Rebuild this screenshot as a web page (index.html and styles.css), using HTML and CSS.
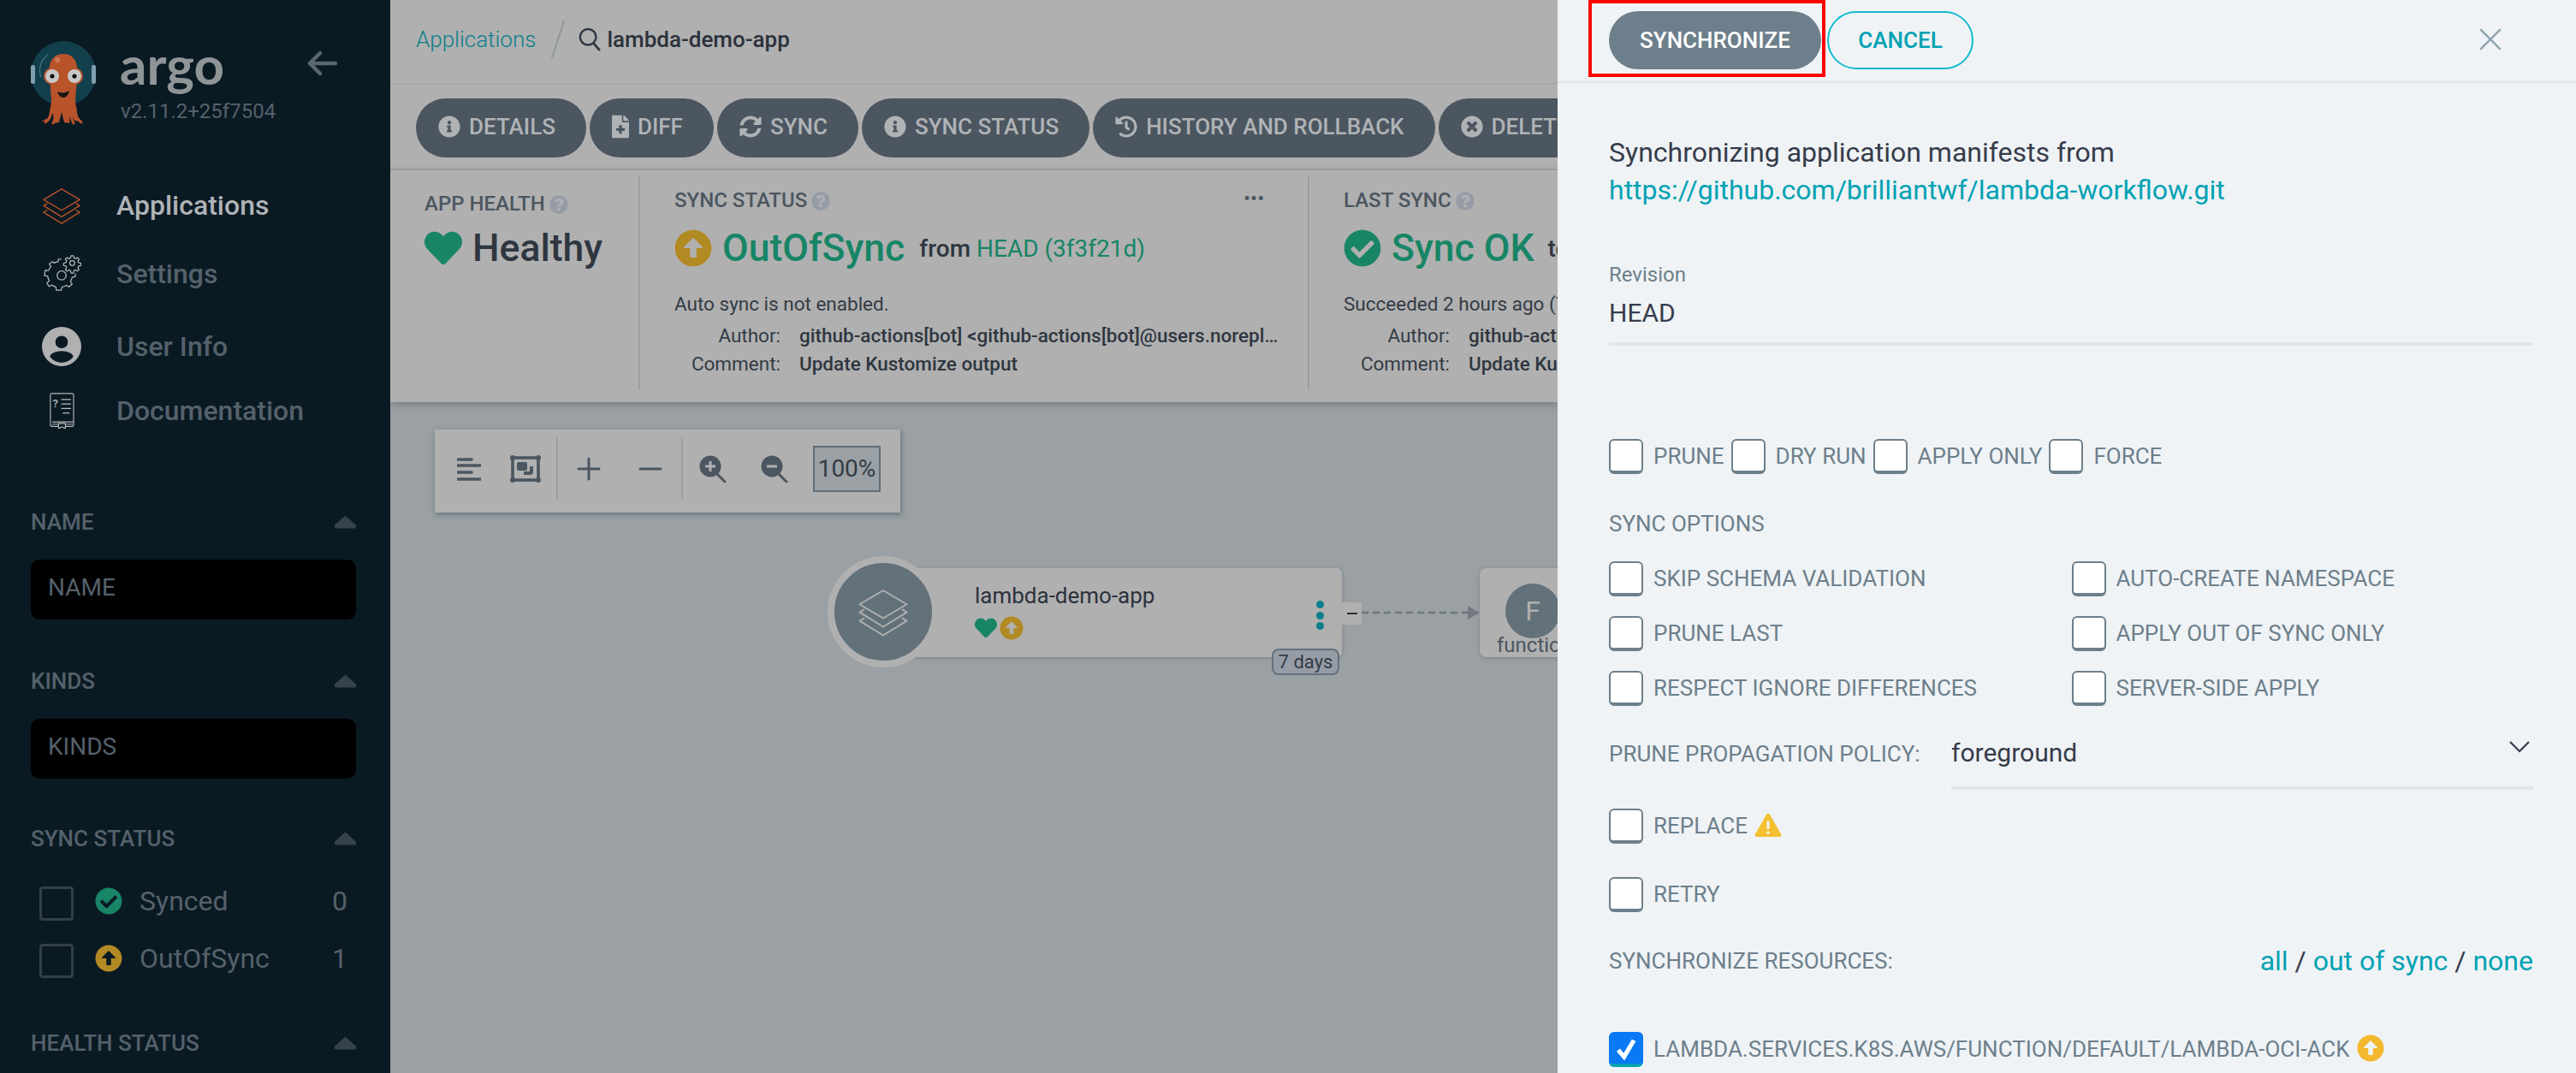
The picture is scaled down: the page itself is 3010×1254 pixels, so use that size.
FILE: index.html
```html
<!DOCTYPE html>
<html lang="en">
<head>
<meta charset="utf-8">
<title>lambda-demo-app - Argo CD</title>
<link rel="stylesheet" href="styles.css">
</head>
<body>
<svg class="sprite" aria-hidden="true">
  <symbol id="i-heart" viewBox="0 0 512 512"><path d="M462.3 62.6C407.5 15.9 326 24.3 275.7 76.2L256 96.5l-19.7-20.3C186.1 24.3 104.5 15.9 49.7 62.6c-62.8 53.6-66.1 149.8-9.9 207.9l193.5 199.8c12.5 12.9 32.8 12.9 45.3 0l193.5-199.8c56.3-58.1 53-154.3-9.8-207.9z"/></symbol>
  <symbol id="i-up" viewBox="0 0 512 512"><path d="M8 256C8 119 119 8 256 8s248 111 248 248-111 248-248 248S8 393 8 256zm292 116V256h70.9c10.7 0 16.1-13 8.5-20.5L264.5 121.2c-4.7-4.7-12.2-4.7-16.9 0l-115 114.3c-7.6 7.6-2.2 20.5 8.5 20.5H212v116c0 6.6 5.4 12 12 12h64c6.6 0 12-5.4 12-12z"/></symbol>
  <symbol id="i-check" viewBox="0 0 512 512"><path d="M504 256c0 136.967-111.033 248-248 248S8 392.967 8 256 119.033 8 256 8s248 111.033 248 248zM227.314 387.314l184-184c6.248-6.248 6.248-16.379 0-22.627l-22.627-22.627c-6.248-6.249-16.379-6.249-22.628 0L216 308.118l-70.059-70.059c-6.248-6.248-16.379-6.248-22.628 0l-22.627 22.627c-6.248 6.248-6.248 16.379 0 22.627l104 104c6.249 6.249 16.379 6.249 22.628.001z"/></symbol>
  <symbol id="i-info" viewBox="0 0 512 512"><path d="M256 8C119.043 8 8 119.083 8 256c0 136.997 111.043 248 248 248s248-111.003 248-248C504 119.083 392.957 8 256 8zm0 110c23.196 0 42 18.804 42 42s-18.804 42-42 42-42-18.804-42-42 18.804-42 42-42zm56 254c0 6.627-5.373 12-12 12h-88c-6.627 0-12-5.373-12-12v-24c0-6.627 5.373-12 12-12h12v-64h-12c-6.627 0-12-5.373-12-12v-24c0-6.627 5.373-12 12-12h64c6.627 0 12 5.373 12 12v100h12c6.627 0 12 5.373 12 12v24z"/></symbol>
  <symbol id="i-q" viewBox="0 0 512 512"><path d="M504 256c0 136.997-111.043 248-248 248S8 392.997 8 256C8 119.083 119.043 8 256 8s248 111.083 248 248zM262.655 90c-54.497 0-89.255 22.957-116.549 63.758-3.536 5.286-2.353 12.415 2.715 16.258l34.699 26.31c5.205 3.947 12.621 3.008 16.665-2.122 17.864-22.658 30.113-35.797 57.303-35.797 20.429 0 45.698 13.148 45.698 32.958 0 14.976-12.363 22.667-32.534 33.976C247.128 238.528 216 254.941 216 296v4c0 6.627 5.373 12 12 12h56c6.627 0 12-5.373 12-12v-1.333c0-28.462 83.186-29.647 83.186-106.667 0-58.002-60.165-102-116.531-102zM256 338c-25.365 0-46 20.635-46 46 0 25.364 20.635 46 46 46s46-20.636 46-46c0-25.365-20.635-46-46-46z"/></symbol>
  <symbol id="i-times" viewBox="0 0 512 512"><path d="M256 8C119 8 8 119 8 256s111 248 248 248 248-111 248-248S393 8 256 8zm121.6 313.1c4.7 4.7 4.7 12.3 0 17L338 377.6c-4.7 4.7-12.3 4.7-17 0L256 312l-65.1 65.6c-4.7 4.7-12.3 4.7-17 0L134.4 338c-4.7-4.7-4.7-12.3 0-17l65.6-65-65.6-65.1c-4.7-4.7-4.7-12.3 0-17l39.6-39.6c4.7-4.7 12.3-4.7 17 0l65 65.7 65.1-65.6c4.7-4.7 12.3-4.7 17 0l39.6 39.6c4.7 4.7 4.7 12.3 0 17L312 256l65.6 65.1z"/></symbol>
  <symbol id="i-history" viewBox="0 0 512 512"><path d="M504 255.531c.253 136.64-111.18 248.372-247.82 248.468-59.015.042-113.223-20.53-155.822-54.911-11.077-8.94-11.905-25.541-1.839-35.607l11.267-11.267c8.609-8.609 22.353-9.551 31.891-1.984C173.062 425.135 212.781 440 256 440c101.705 0 184-82.311 184-184 0-101.705-82.311-184-184-184-48.814 0-93.149 18.969-126.068 49.932l50.754 50.754c10.08 10.08 2.941 27.314-11.313 27.314H24c-8.837 0-16-7.163-16-16V38.627c0-14.254 17.234-21.393 27.314-11.314l49.372 49.372C129.209 34.136 189.552 8 256 8c136.81 0 247.747 110.78 248 247.531zm-180.912 78.784l9.823-12.63c8.138-10.463 6.253-25.542-4.21-33.679L288 256.349V152c0-13.255-10.745-24-24-24h-16c-13.255 0-24 10.745-24 24v135.651l65.409 50.874c10.463 8.137 25.541 6.253 33.679-4.21z"/></symbol>
  <symbol id="i-sync" viewBox="0 0 512 512"><path d="M370.72 133.28C339.458 104.008 298.888 87.962 255.848 88c-77.458.068-144.328 53.178-162.791 126.85-1.344 5.363-6.122 9.15-11.651 9.15H24.103c-7.498 0-13.194-6.807-11.807-14.176C33.933 94.924 134.813 8 256 8c66.448 0 126.791 26.136 171.315 68.685L463.03 40.97C478.149 25.851 504 36.559 504 57.941V192c0 13.255-10.745 24-24 24H345.941c-21.382 0-32.09-25.851-16.971-40.971l41.75-41.749zM32 296h134.059c21.382 0 32.09 25.851 16.971 40.971l-41.75 41.75c31.262 29.273 71.835 45.319 114.876 45.28 77.418-.07 144.315-53.144 162.787-126.849 1.344-5.363 6.122-9.15 11.651-9.15h57.304c7.498 0 13.194 6.807 11.807 14.176C478.067 417.076 377.187 504 256 504c-66.448 0-126.791-26.136-171.315-68.685L48.97 471.03C33.851 486.149 8 475.441 8 454.059V320c0-13.255 10.745-24 24-24z"/></symbol>
  <symbol id="i-file" viewBox="0 0 384 512"><path d="M377 105L279.1 7c-4.5-4.5-10.6-7-17-7H256v128h128v-6.1c0-6.3-2.5-12.4-7-16.9zm-153 31V0H24C10.7 0 0 10.7 0 24v464c0 13.3 10.7 24 24 24h336c13.3 0 24-10.7 24-24V160H248c-13.2 0-24-10.8-24-24zm64 160v48c0 4.4-3.6 8-8 8h-56v56c0 4.4-3.6 8-8 8h-48c-4.4 0-8-3.6-8-8v-56h-56c-4.4 0-8-3.6-8-8v-48c0-4.4 3.6-8 8-8h56v-56c0-4.4 3.6-8 8-8h48c4.4 0 8 3.6 8 8v56h56c4.4 0 8 3.6 8 8z"/></symbol>
  <symbol id="i-stack" viewBox="0 0 48 48"><g fill="none" stroke="currentColor" stroke-width="1.5" stroke-linejoin="round" stroke-linecap="round"><path d="M24 4 46 17 24 30 2 17Z"/><path d="M6 22 2 24.5 24 38 46 24.5 42 22"/><path d="M6 30 2 32.5 24 46 46 32.5 42 30"/></g></symbol>
</svg>

<div class="app">
  <aside class="sidebar">
    <div class="brand">
      <svg class="brand-logo" viewBox="0 0 80 104" aria-hidden="true">
        <circle cx="38" cy="38" r="38" fill="#123f4c"/>
        <rect x="0" y="28" width="5" height="22" rx="2" fill="#7f9fae"/>
        <rect x="71" y="28" width="5" height="22" rx="2" fill="#7f9fae"/>
        <path d="M12 42a22 22 0 0 1 8-26" fill="none" stroke="#4a7480" stroke-width="1.2"/>
        <path d="M20 90c3-5 3-12 4-20L22 40c-2-17 5-25 16-25s18 8 16 25l-2 30c1 8 1 15 4 20l4 4-9-1-5-9-1 12-6-1-3-12-3 12-6 1-1-12-5 9-9 1Z" fill="#b8532a"/>
        <path d="M24 78C24 86 22 92 17 95M30 78c0 8-1 13-4 18M46 78c0 8 1 13 4 18M52 78c0 8 2 14 7 17" fill="none" stroke="#b8532a" stroke-width="3" stroke-linecap="round"/>
        <circle cx="25" cy="41" r="10" fill="#b8532a"/><circle cx="51" cy="41" r="10" fill="#b8532a"/>
        <circle cx="25" cy="41" r="8" fill="#c8c8c8"/><circle cx="51" cy="41" r="8" fill="#c8c8c8"/>
        <circle cx="25" cy="41" r="2.6" fill="#111"/><circle cx="51" cy="41" r="2.6" fill="#111"/>
        <path d="M31 59c4 2 10 2 14-1-1 5-4 8-7 8s-6-3-7-7Z" fill="#161616"/>
        <circle cx="31" cy="22" r="3" fill="#cf7a5a"/>
      </svg>
      <div class="brand-text">
        <span class="brand-name">argo</span>
        <span class="brand-version">v2.11.2+25f7504</span>
      </div>
      <svg class="brand-back" viewBox="0 0 36 32" aria-hidden="true"><path d="M15 3 3 15l12 12M3 15h30" fill="none" stroke="#5a6670" stroke-width="4.5" stroke-linecap="round" stroke-linejoin="round"/></svg>
    </div>

    <nav class="nav">
      <a class="nav-item nav-item--active">
        <svg class="nav-icon nav-icon--orange" aria-hidden="true"><use href="#i-stack"/></svg>
        <span>Applications</span>
      </a>
      <a class="nav-item">
        <svg class="nav-icon" viewBox="0 0 48 48" aria-hidden="true"><g fill="none" stroke="currentColor" stroke-width="1.3" stroke-linejoin="round"><path d="M23 7v-1h-3v3c-2 .4-3.6 1-5 2l-2-2-4 3 2 3c-1.400 1.500-2.400 3.300-3 5l-4-.4L3 26l4 1c.3 2 1 4 2 5.500l-3 3 3 4 3-2c1.500 1.200 3.200 2 5 2.500l.5 4h6l1-4c2-.3 3.700-1 5.300-2l3 2 4-3.500-2-3.500c1-1.500 1.800-3 2.200-5l3.600-.5.400-4"/><circle cx="24" cy="26" r="5.500"/><circle cx="37" cy="11" r="3"/><path d="M35.500 2h3l.5 2.700 2 .9 2.300-1.500 2 2-1.500 2.300.9 2 2.800.6v3l-2.800.5-.9 2 1.500 2.300-2 2-2.300-1.500-2 .9-.5 2.800h-3l-.6-2.800-2-.9-2.200 1.500-2.100-2 1.500-2.300-.9-2-2.700-.5v-3l2.700-.6.900-2-1.500-2.300 2.100-2 2.200 1.500 2-.9Z"/></g></svg>
        <span>Settings</span>
      </a>
      <a class="nav-item nav-item--user">
        <svg class="nav-icon" viewBox="0 0 44 44" aria-hidden="true"><path fill="#b0b0b0" fill-rule="evenodd" d="M22 0a22 22 0 1 1 0 44 22 22 0 0 1 0-44Zm0 10a7 7 0 1 0 0 14 7 7 0 0 0 0-14Zm0 17c-7 0-13 3-13 6.500 3 4 8 6.500 13 6.500s10-2.500 13-6.500C35 30 29 27 22 27Z"/></svg>
        <span>User Info</span>
      </a>
      <a class="nav-item nav-item--docs">
        <svg class="nav-icon" viewBox="0 0 44 48" aria-hidden="true"><g fill="none" stroke="currentColor" stroke-width="1.300" stroke-linecap="round" stroke-linejoin="round"><path d="M10 39H36a2 2 0 0 0 2-2V3a2 2 0 0 0-2-2H9a2 2 0 0 0-2 2v39a3 3 0 0 0 3 3h8M27 45h9a2 2 0 0 0 2-2v-5"/><path d="M18 41h9v7l-4.500-2.500L18 48Z"/><path d="M10 42h8M27 42h10M22 9h12M22 15h12M22 21h12M24 27h8"/></g><text x="10" y="19" class="doc-q">?</text></svg>
        <span>Documentation</span>
      </a>
    </nav>

    <section class="filter">
      <header class="filter-title"><span>NAME</span><i class="filter-caret"></i></header>
      <div class="filter-input">NAME</div>
    </section>
    <section class="filter">
      <header class="filter-title"><span>KINDS</span><i class="filter-caret"></i></header>
      <div class="filter-input">KINDS</div>
    </section>
    <section class="filter filter--list">
      <header class="filter-title"><span>SYNC STATUS</span><i class="filter-caret"></i></header>
      <ul class="filter-list">
        <li class="filter-row"><i class="filter-check"></i><svg class="filter-icon filter-icon--green" aria-hidden="true"><use href="#i-check"/></svg><span class="filter-label">Synced</span><span class="filter-count">0</span></li>
        <li class="filter-row"><i class="filter-check"></i><svg class="filter-icon filter-icon--gold" aria-hidden="true"><use href="#i-up"/></svg><span class="filter-label">OutOfSync</span><span class="filter-count">1</span></li>
      </ul>
    </section>
    <section class="filter">
      <header class="filter-title"><span>HEALTH STATUS</span><i class="filter-caret"></i></header>
    </section>
  </aside>

  <main class="main">
    <header class="topbar">
      <a class="crumb-link">Applications</a>
      <i class="crumb-slash"></i>
      <svg class="crumb-search" viewBox="0 0 28 30" aria-hidden="true"><circle cx="12" cy="12" r="10" fill="none" stroke="#2e3640" stroke-width="2.600"/><path d="M19 20l7 8" stroke="#2e3640" stroke-width="3" stroke-linecap="round"/></svg>
      <span class="crumb-current">lambda-demo-app</span>
    </header>

    <div class="actions">
      <button class="action"><svg class="action-icon" aria-hidden="true"><use href="#i-info"/></svg>DETAILS</button>
      <button class="action"><svg class="action-icon action-icon--file" aria-hidden="true"><use href="#i-file"/></svg>DIFF</button>
      <button class="action"><svg class="action-icon" aria-hidden="true"><use href="#i-sync"/></svg>SYNC</button>
      <button class="action"><svg class="action-icon" aria-hidden="true"><use href="#i-info"/></svg>SYNC STATUS</button>
      <button class="action"><svg class="action-icon" aria-hidden="true"><use href="#i-history"/></svg>HISTORY AND ROLLBACK</button>
      <button class="action"><svg class="action-icon" aria-hidden="true"><use href="#i-times"/></svg>DELETE</button>
    </div>

    <section class="summary">
      <div class="sum-col sum-col--health">
        <div class="sum-title sum-title--health">APP HEALTH <svg class="sum-q" aria-hidden="true"><use href="#i-q"/></svg></div>
        <div class="sum-big sum-big--health"><svg class="sum-heart" aria-hidden="true"><use href="#i-heart"/></svg><span class="sum-healthy">Healthy</span></div>
      </div>
      <div class="sum-col sum-col--sync">
        <div class="sum-title">SYNC STATUS <svg class="sum-q" aria-hidden="true"><use href="#i-q"/></svg></div>
        <span class="sum-dots">•••</span>
        <div class="sum-big">
          <svg class="sum-status sum-status--gold" aria-hidden="true"><use href="#i-up"/></svg>
          <span class="sum-state">OutOfSync</span>
          <span class="sum-from">from <span class="sum-rev">HEAD (3f3f21d)</span></span>
        </div>
        <p class="sum-note">Auto sync is not enabled.</p>
        <dl class="sum-meta">
          <dt>Author:</dt><dd>github-actions[bot] &lt;github-actions[bot]@users.noreply.github.com&gt;</dd>
          <dt>Comment:</dt><dd>Update Kustomize output</dd>
        </dl>
      </div>
      <div class="sum-col sum-col--last">
        <div class="sum-title">LAST SYNC <svg class="sum-q" aria-hidden="true"><use href="#i-q"/></svg></div>
        <div class="sum-big">
          <svg class="sum-status sum-status--green" aria-hidden="true"><use href="#i-check"/></svg>
          <span class="sum-state">Sync OK</span>
          <span class="sum-from sum-from--to">to <span class="sum-rev">3f3f21d</span></span>
        </div>
        <p class="sum-note">Succeeded 2 hours ago (Thu Jul 25 2024)</p>
        <dl class="sum-meta">
          <dt>Author:</dt><dd>github-actions[bot] &lt;github-actions[bot]@users.noreply.github.com&gt;</dd>
          <dt>Comment:</dt><dd>Update Kustomize output</dd>
        </dl>
      </div>
    </section>

    <div class="canvas">
      <div class="tools">
        <span class="tool"><svg viewBox="0 0 28 28" aria-hidden="true"><path d="M1 3h16M1 10h27M1 18h16M1 26h27" stroke="#4b5660" stroke-width="3.600" stroke-linecap="round"/></svg></span>
        <span class="tool"><svg viewBox="0 0 36 32" aria-hidden="true"><rect x="3" y="3" width="30" height="26" fill="none" stroke="#4b5660" stroke-width="3.600"/><circle cx="3" cy="3" r="3" fill="#4b5660"/><circle cx="33" cy="3" r="3" fill="#4b5660"/><circle cx="3" cy="29" r="3" fill="#4b5660"/><circle cx="33" cy="29" r="3" fill="#4b5660"/><rect x="8" y="8" width="12" height="10" rx="2" fill="#4b5660"/><path d="M27 13v6a4 4 0 0 1-4 4h-7v-4h7v-6Z" fill="#4b5660"/></svg></span>
        <i class="tool-sep"></i>
        <span class="tool"><svg viewBox="0 0 28 28" aria-hidden="true"><path d="M14 2v24M2 14h24" stroke="#4b5660" stroke-width="3" stroke-linecap="round"/></svg></span>
        <span class="tool"><svg viewBox="0 0 28 28" aria-hidden="true"><path d="M2 14h24" stroke="#4b5660" stroke-width="3" stroke-linecap="round"/></svg></span>
        <i class="tool-sep"></i>
        <span class="tool"><svg viewBox="0 0 32 32" aria-hidden="true"><circle cx="13" cy="13" r="12.500" fill="#4b5660"/><path d="M21 22l9 9" stroke="#4b5660" stroke-width="3" stroke-linecap="round"/><path d="M7 13h12M13 7v12" stroke="#b0b0b0" stroke-width="3"/></svg></span>
        <span class="tool"><svg viewBox="0 0 32 32" aria-hidden="true"><circle cx="13" cy="13" r="12.500" fill="#4b5660"/><path d="M21 22l9 9" stroke="#4b5660" stroke-width="3" stroke-linecap="round"/><path d="M7 13h12" stroke="#b0b0b0" stroke-width="3"/></svg></span>
        <span class="tool-zoom">100%</span>
      </div>

      <div class="node node--app">
        <span class="node-name">lambda-demo-app</span>
        <span class="node-status"><svg class="node-heart" aria-hidden="true"><use href="#i-heart"/></svg><svg class="node-up" aria-hidden="true"><use href="#i-up"/></svg></span>
        <i class="node-dots"></i>
      </div>
      <div class="node-circle"><svg class="node-stack" aria-hidden="true"><use href="#i-stack"/></svg></div>
      <span class="node-collapse"><i></i></span>
      <span class="node-age">7 days</span>
      <svg class="edge" viewBox="0 0 138 24" aria-hidden="true"><path d="M0 12H126" stroke="#6c7780" stroke-width="2.500" stroke-dasharray="8 5"/><path d="M124 4l14 8-14 8Z" fill="#747a7f"/></svg>
      <div class="node node--fn">
        <span class="fn-circle">F</span>
        <span class="fn-kind">function</span>
      </div>
    </div>
  </main>

  <aside class="panel">
    <header class="panel-head">
      <button class="btn btn--primary">SYNCHRONIZE</button>
      <button class="btn btn--outline">CANCEL</button>
      <svg class="panel-close" viewBox="0 0 28 28" aria-hidden="true"><path d="M2 2l24 24M26 2 2 26" stroke="#8fa4b1" stroke-width="2.600" stroke-linecap="round"/></svg>
      <i class="panel-mark"></i>
    </header>
    <div class="panel-body">
      <p class="panel-lead">Synchronizing application manifests from<br><a class="panel-link">https://github.com/brilliantwf/lambda-workflow.git</a></p>
      <div class="field">
        <label class="field-label">Revision</label>
        <div class="field-value">HEAD</div>
      </div>
      <div class="check-row">
        <label class="check"><i class="box"></i><span>PRUNE</span></label>
        <label class="check"><i class="box"></i><span>DRY RUN</span></label>
        <label class="check"><i class="box"></i><span>APPLY ONLY</span></label>
        <label class="check"><i class="box"></i><span>FORCE</span></label>
      </div>
      <div class="opt-title">SYNC OPTIONS</div>
      <div class="opt-grid">
        <label class="check"><i class="box"></i><span>SKIP SCHEMA VALIDATION</span></label>
        <label class="check"><i class="box"></i><span>AUTO-CREATE NAMESPACE</span></label>
        <label class="check"><i class="box"></i><span>PRUNE LAST</span></label>
        <label class="check"><i class="box"></i><span>APPLY OUT OF SYNC ONLY</span></label>
        <label class="check"><i class="box"></i><span>RESPECT IGNORE DIFFERENCES</span></label>
        <label class="check"><i class="box"></i><span>SERVER-SIDE APPLY</span></label>
      </div>
      <div class="policy">
        <span class="policy-label">PRUNE PROPAGATION POLICY:</span>
        <div class="policy-select"><span>foreground</span><svg class="policy-caret" viewBox="0 0 24 14" aria-hidden="true"><path d="M1 1l11 11L23 1" fill="none" stroke="#363c4a" stroke-width="2.200"/></svg></div>
      </div>
      <label class="check check--replace"><i class="box"></i><span>REPLACE</span><svg class="warn" viewBox="0 0 32 28" aria-hidden="true"><path d="M16 1c1 0 1.800.5 2.300 1.400l12.800 22.300c.9 1.600-.2 3.300-2 3.300H2.900c-1.800 0-2.900-1.700-2-3.300L13.700 2.400C14.200 1.500 15 1 16 1Z" fill="#f4c030"/><rect x="14.500" y="9" width="3" height="10" rx="1.500" fill="#eff3f6"/><circle cx="16" cy="23" r="1.800" fill="#eff3f6"/></svg></label>
      <label class="check check--retry"><i class="box"></i><span>RETRY</span></label>
      <div class="res-head">
        <span class="res-title">SYNCHRONIZE RESOURCES:</span>
        <span class="res-links"><a>all</a> / <a>out of sync</a> / <a>none</a></span>
      </div>
      <label class="check check--res"><i class="box box--on"><svg viewBox="0 0 24 28" aria-hidden="true"><path d="M4 15l6 7L20 5" fill="none" stroke="#fff" stroke-width="4.500"/></svg></i><span>LAMBDA.SERVICES.K8S.AWS/FUNCTION/DEFAULT/LAMBDA-OCI-ACK</span><svg class="res-up" aria-hidden="true"><use href="#i-up"/></svg></label>
    </div>
  </aside>
</div>
</body>
</html>
```

FILE: styles.css
```css
* { box-sizing: border-box; }
html, body { margin: 0; height: 100%; }
body { font-family: Roboto, "Liberation Sans", sans-serif; overflow: hidden; background: #9aa0a3; }
p, dl, dd, ul { margin: 0; padding: 0; }
.sprite { position: absolute; width: 0; height: 0; }
.app { display: flex; width: 3010px; height: 1254px; overflow: hidden; }

/* sidebar */
.sidebar { flex: 0 0 456px; height: 1254px; overflow: hidden; background: #0a1a23; padding: 48px 40px 0 36px; color: #55616b; }
.brand { display: flex; height: 152px; position: relative; }
.brand-logo { width: 80px; height: 104px; flex: none; }
.brand-text { display: flex; flex-direction: column; margin-left: 24px; }
.brand-name { font-family: Lato, sans-serif; font-weight: 700; font-size: 62px; line-height: 62px; color: #8f9496; margin-top: -4px; }
.brand-version { font-size: 24px; line-height: 30px; color: #55616b; margin: 9px 0 0 1px; }
.brand-back { position: absolute; left: 323px; top: 11px; width: 36px; height: 32px; }
.nav { display: flex; flex-direction: column; margin-bottom: 72px; }
.nav-item { display: flex; align-items: center; height: 80px; font-size: 32px; color: #55616b; font-weight: 500; }
.nav-item--active { color: #b0b3b6; }
.nav-item--user { margin-top: 5px; margin-bottom: -5px; }
.nav-icon { width: 46px; height: 46px; flex: none; margin: 0 41px 0 13px; color: #b5b8ba; }
.nav-icon--orange { color: #b8532a; }
.nav-item--docs .nav-icon { height: 42px; }
.doc-q { font-family: Roboto, sans-serif; font-size: 15px; fill: #b5b8ba; }
.filter { margin-bottom: 54px; }
.filter--list { margin-bottom: 45px; margin-top: -2px; }
.filter-title { display: flex; align-items: center; justify-content: space-between; height: 36px; font-size: 26px; font-weight: 500; color: #55616b; }
.filter-caret { width: 25px; height: 15px; background: #36434d; clip-path: polygon(50% 0, 100% 75%, 100% 100%, 0 100%, 0 75%); border-radius: 2px; }
.filter-input { margin-top: 26px; height: 70px; line-height: 66px; padding-left: 20px; background: #000; border-radius: 10px; font-size: 28px; color: #55616b; }
.filter-list { list-style: none; margin-top: 24px; }
.filter-row { display: flex; align-items: center; height: 67px; font-size: 32px; padding-right: 10px; }
.filter-check { width: 40px; height: 40px; margin-left: 10px; border: 3px solid #333f49; border-radius: 4px; flex: none; }
.filter-icon { width: 32px; height: 32px; margin: 0 20px 6px 25px; flex: none; }
.filter-icon--green { fill: #178566; }
.filter-icon--gold { fill: #b28a24; }
.filter-label { flex: 1; font-weight: 400; margin-bottom: 6px; }
.filter-count { margin-bottom: 6px; }

/* main */
.main { flex: 0 0 1364px; height: 1254px; overflow: hidden; display: flex; flex-direction: column; background: #9aa0a3; }
.topbar { flex: none; height: 99px; background: #b0b0b0; border-bottom: 2px solid #a5a7a8; display: flex; align-items: center; padding: 0 0 6px 30px; }
.crumb-link { font-size: 26px; font-weight: 300; color: #0d7f8c; }
.crumb-slash { width: 2px; height: 46px; margin: 0 23px 0 25px; background: #8e979e; transform: rotate(18deg); }
.crumb-search { width: 26px; height: 28px; flex: none; margin-right: 7px; }
.crumb-current { font-size: 26px; color: #2b323c; font-weight: 500; }
.actions { flex: none; height: 100px; background: #b0b0b0; border-bottom: 2px solid #a5a7a8; display: flex; gap: 4px; padding: 16px 0 0 30px; overflow: hidden; }
.action { flex: none; height: 69px; border: 0; border-radius: 35px; background: #4b5660; color: #b0b3b6; font-family: inherit; font-weight: 500; font-size: 26px; padding: 0 36px 4px 26px; display: flex; align-items: center; white-space: nowrap; }
.action-icon { width: 26px; height: 28px; margin-right: 10px; fill: #b0b3b6; flex: none; }
.action-icon--file { width: 20px; }
.summary { flex: none; height: 271px; background: #b0b0b0; display: flex; padding: 7px 0 15px; box-shadow: 0 2px 8px rgba(70, 80, 90, .5); position: relative; z-index: 1; }
.sum-col { height: 249px; border-right: 2px solid #979ea4; padding-left: 40px; position: relative; color: #2e3640; flex: none; }
.sum-col--health { width: 292px; }
.sum-col--sync { width: 782px; }
.sum-col--last { width: 400px; border-right: 0; overflow: hidden; }
.sum-title { font-size: 24px; font-weight: 500; color: #4b5660; line-height: 32px; padding-top: 12px; height: 44px; display: flex; align-items: center; gap: 5px; white-space: nowrap; }
.sum-title--health { padding-top: 16px; height: 48px; }
.sum-q { width: 22px; height: 24px; fill: #959ca6; margin-top: 1px; }
.sum-big { display: flex; align-items: center; height: 52px; margin-top: 14px; white-space: nowrap; }
.sum-big--health { margin-top: 10px; }
.sum-heart { width: 44px; height: 44px; fill: #178566; margin-right: 12px; }
.sum-healthy { font-size: 44.5px; font-weight: 500; color: #2e3640; }
.sum-status { width: 44px; height: 44px; margin-right: 12px; flex: none; }
.sum-status--gold { fill: #b28a24; }
.sum-status--green { fill: #178566; }
.sum-state { font-size: 44.5px; font-weight: 500; color: #178566; }
.sum-from { font-size: 28px; margin-left: 17px; color: #2e3640; font-weight: 500; }
.sum-from--to { margin-left: 16px; }
.sum-rev { color: #178566; font-weight: 400; }
.sum-dots { position: absolute; left: 705px; top: 14px; font-size: 24px; line-height: 24px; color: #4b5660; }
.sum-note { font-size: 22.5px; line-height: 30px; margin-top: 24px; color: #333b45; white-space: nowrap; }
.sum-meta { display: grid; grid-template-columns: 124px 564px; column-gap: 22px; grid-auto-rows: 33px; margin-top: 6px; font-size: 22.5px; line-height: 33px; }
.sum-meta dt { text-align: right; color: #333b45; }
.sum-meta dd { font-weight: 500; color: #2e3640; white-space: nowrap; overflow: hidden; text-overflow: ellipsis; }

/* canvas */
.canvas { flex: 1; position: relative; background: #9aa0a3; overflow: hidden; }
.tools { position: absolute; left: 52px; top: 32px; width: 544px; height: 97px; background: #b0b0b0; box-shadow: 1px 2px 6px rgba(60, 75, 90, .6); display: flex; align-items: center; padding: 0 0 6px 7px; }
.tool { width: 66px; height: 40px; display: flex; align-items: center; justify-content: center; flex: none; }
.tool svg { width: 32px; height: 32px; }
.tool:nth-child(1) svg { width: 28px; height: 28px; }
.tool:nth-child(2) svg { width: 36px; height: 32px; }
.tool:nth-child(4) svg, .tool:nth-child(5) svg { width: 28px; height: 28px; }
.tool-sep { width: 2px; height: 71px; background: #979ea4; margin: 0 3px; flex: none; }
.tool:nth-child(5) { margin-left: 6px; }
.tool:nth-child(7) { margin-left: -1px; }
.tool:nth-child(8) { margin-left: 6px; }
.tool-zoom { width: 79px; height: 54px; line-height: 50px; text-align: center; margin-left: 12px; border: 2px solid #5f6f7b; background: #9aa0a3; font-size: 28px; color: #333b45; flex: none; }
.node { position: absolute; background: #b0b0b0; border-radius: 6px; box-shadow: 0 1px 4px rgba(70, 85, 100, .4); }
.node--app { left: 610px; top: 194px; width: 502px; height: 104px; }
.node-name { position: absolute; left: 73px; top: 14px; font-size: 26px; line-height: 36px; color: #2b323c; }
.node-status { position: absolute; left: 73px; top: 56px; display: flex; gap: 3px; align-items: center; }
.node-heart { width: 26px; height: 26px; fill: #178566; }
.node-up { width: 28px; height: 28px; fill: #b28a24; }
.node-dots { position: absolute; right: 21px; top: 38px; width: 9px; height: 9px; border-radius: 50%; background: #0b7f8b; box-shadow: 0 13px 0 #0b7f8b, 0 25px 0 #0b7f8b; }
.node-circle { position: absolute; left: 511px; top: 180px; width: 130px; height: 130px; border-radius: 50%; border: 8px solid #b0b0b0; background: #63717b; display: flex; align-items: center; justify-content: center; }
.node-stack { width: 60px; height: 60px; color: #b0b0b0; }
.node-collapse { position: absolute; left: 1112px; top: 234px; width: 23px; height: 26px; background: #b0b0b0; display: flex; align-items: center; justify-content: center; }
.node-collapse i { width: 12px; height: 2.500px; background: #252c38; }
.node-age { position: absolute; left: 1030px; top: 288px; width: 79px; height: 31px; border: 2px solid #63717b; border-radius: 8px; background: #959ca6; font-size: 22px; line-height: 27px; text-align: center; color: #333b45; }
.edge { position: absolute; left: 1135px; top: 234px; width: 138px; height: 24px; }
.node--fn { left: 1273px; top: 194px; width: 200px; height: 104px; border-radius: 8px; }
.fn-circle { position: absolute; left: 30px; top: 18px; width: 64px; height: 64px; border-radius: 50%; background: #63717b; color: #b0b0b0; text-align: center; font-size: 32px; line-height: 64px; }
.fn-kind { position: absolute; left: 20px; top: 75px; font-size: 24px; line-height: 30px; color: #4b5660; }

/* panel */
.panel { flex: 0 0 1190px; height: 1254px; overflow: hidden; background: #eff3f6; color: #363c4a; }
.panel-head { position: relative; height: 97px; border-bottom: 2px solid #dee6eb; display: flex; gap: 7px; padding: 13px 0 0 60px; }
.btn { height: 68px; border-radius: 34px; font-family: inherit; font-size: 26px; font-weight: 500; padding: 0; }
.btn--primary { width: 248px; background: #6d7f8b; border: 0; color: #fff; }
.btn--outline { width: 171px; background: transparent; border: 2px solid #12bbcb; color: #00a2b3; }
.panel-close { position: absolute; left: 1077px; top: 33px; width: 26px; height: 26px; }
.panel-mark { position: absolute; left: 36px; top: 0; width: 277px; height: 90px; border: 4px solid #fe0000; }
.panel-body { padding: 59px 50px 0 60px; }
.panel-lead { font-size: 32px; line-height: 44px; color: #363c4a; }
.panel-link { color: #00a2b3; }
.field { margin-top: 62px; height: 98px; border-bottom: 4px solid #dee6eb; }
.field-label { display: block; font-size: 24px; line-height: 30px; color: #6d7f8b; }
.field-value { font-size: 30px; line-height: 44px; margin-top: 8px; color: #363c4a; }
.check { display: flex; align-items: center; gap: 12px; font-size: 26px; line-height: 41px; color: #6d7f8b; white-space: nowrap; }
.box { width: 40px; height: 41px; flex: none; background: #fff; border: 2px solid #6d7f8b; border-bottom-width: 4px; border-radius: 6px; display: block; }
.box--on { background: #0a79f5; border-color: #0a79f5; border-bottom-color: #00a2b3; display: flex; align-items: center; justify-content: center; }
.box--on svg { width: 28px; height: 32px; }
.check-row { display: flex; gap: 8px; margin-top: 109px; }
.opt-title { font-size: 26px; line-height: 30px; color: #6d7f8b; margin-top: 43px; }
.opt-grid { display: grid; grid-template-columns: 540.5px 1fr; grid-auto-rows: 64px; margin-top: 17px; }
.policy { display: flex; margin-top: 5px; height: 82px; }
.policy-label { width: 400px; font-size: 26px; line-height: 30px; color: #6d7f8b; padding-top: 25px; flex: none; }
.policy-select { flex: 1; border-bottom: 4px solid #dee6eb; display: flex; justify-content: space-between; font-size: 30px; line-height: 44px; color: #363c4a; padding-top: 17px; }
.policy-caret { width: 24px; height: 14px; margin: 8px 4px 0 0; }
.check--replace { margin-top: 22px; }
.warn { width: 32px; height: 28px; margin-left: -4px; margin-bottom: 4px; }
.check--retry { margin-top: 39px; }
.res-head { display: flex; justify-content: space-between; align-items: center; margin-top: 35px; height: 44px; }
.res-title { font-size: 26px; color: #6d7f8b; }
.res-links { font-size: 32px; color: #363c4a; }
.res-links a { color: #00a2b3; }
.check--res { margin-top: 61px; }
.res-up { width: 32px; height: 32px; fill: #f4b82e; margin-left: -4px; margin-bottom: 4px; flex: none; }
```
